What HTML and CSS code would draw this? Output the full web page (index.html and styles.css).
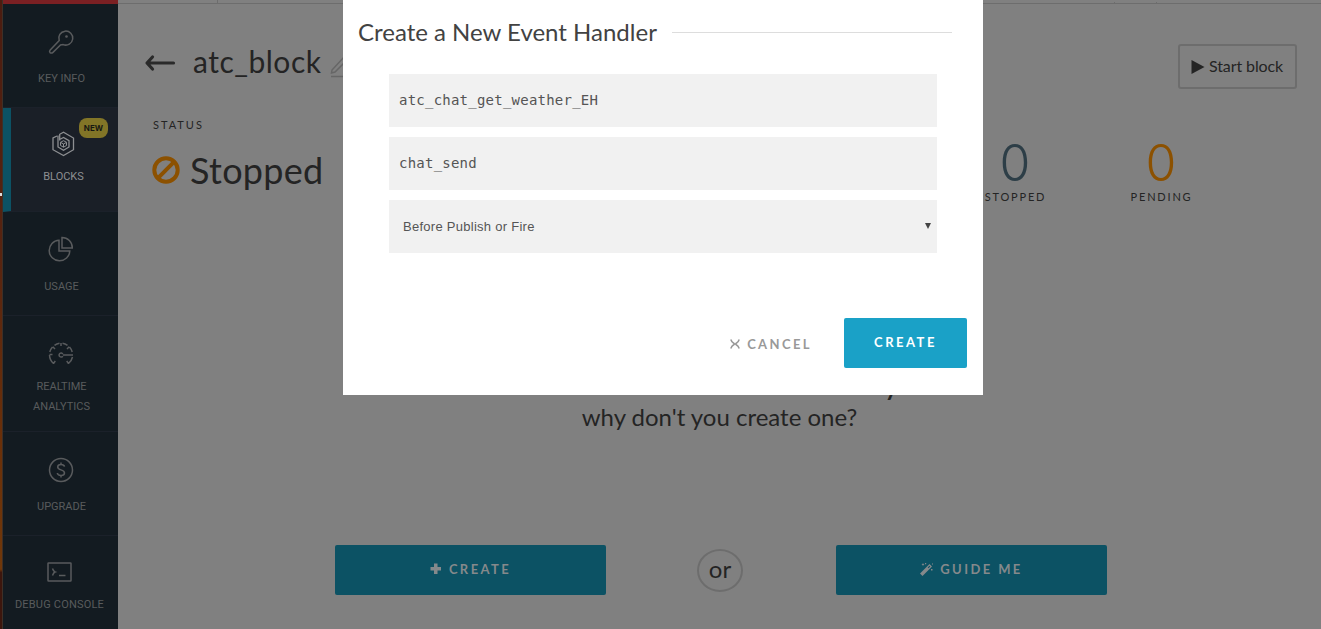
FILE: index.html
```html
<!DOCTYPE html>
<html lang="en">
<head>
<meta charset="utf-8">
<title>Blocks</title>
<link rel="stylesheet" href="styles.css">
</head>
<body>
<div class="app">
  <div class="edge"><i class="glint"></i></div>
  <nav class="sidebar">
    <a class="item key">
      <svg width="26" height="26" viewBox="0 0 26 26"><path d="M11.200 11.500A7 7 0 1 1 15.200 15.600L12.500 16L4.500 23.800Q3.200 24.500 2 23.600Q1 22.300 2.200 21L11.200 11.500Z"/><circle cx="18.500" cy="7.500" r="1.300" class="solid"/></svg>
      <span>KEY INFO</span>
    </a>
    <a class="item blocks">
      <svg width="24" height="26" viewBox="0 0 24 26"><path d="M6 5L2 7V18.700L12.500 24.500L22.500 18.700V7L12.500 1.200L8.700 3.300V9.500M8.700 3.300V8.500L12.500 6.500L18 9.700V16L12.500 19.200L7 16V4.500"/><path d="M9.500 11.300L12.500 9.700L15.500 11.300V14.500L12.500 16.200L9.500 14.500ZM9.500 11.300L12.500 13L15.500 11.300M12.500 13V16.200" stroke-width="1"/></svg>
      <span>BLOCKS</span>
      <b class="badge">NEW</b>
    </a>
    <a class="item usage">
      <svg width="26" height="26" viewBox="0 0 26 26"><path d="M11 4.200A10.300 10.300 0 1 0 21.800 15H11Z"/><path d="M14 1.500V12H24.300A10.300 10.300 0 0 0 14 1.500Z"/></svg>
      <span>USAGE</span>
    </a>
    <a class="item realtime">
      <svg width="26" height="26" viewBox="0 0 26 26"><path d="M5.500 22.500A11.500 11.500 0 0 1 1.500 14M1.800 11A11.500 11.500 0 0 1 4.500 6M6.500 4.300A11.500 11.500 0 0 1 11.500 2.200M14.500 2.200A11.500 11.500 0 0 1 19.500 4.300M21.500 6A11.500 11.500 0 0 1 24.200 11M24.500 16A11.500 11.500 0 0 1 20.500 22.500M13 2V5M4.800 5.800L7 8M21.200 5.800L19 8M1.500 13.500H4.500M5.500 22.500L7.300 20M20.500 22.500L18.700 20M15 14H25M14.800 13A2 2 0 1 0 14.800 15"/></svg>
      <span>REALTIME<br>ANALYTICS</span>
    </a>
    <a class="item upgrade">
      <svg width="26" height="26" viewBox="0 0 26 26"><circle cx="13" cy="13" r="11.500"/><path d="M16.500 9.700C16 6.900 9.800 6.700 9.700 10C9.800 13.800 16.400 12 16.500 16C16.300 19.500 9.700 19.200 9.300 16M13 5.500V7.500M13 18.500V20.500"/></svg>
      <span>UPGRADE</span>
    </a>
    <a class="item debug">
      <svg width="26" height="22" viewBox="0 0 26 22"><rect x="2" y="2" width="23" height="18" rx=".5"/><path d="M6.500 7.500Q7.500 10.500 9 11Q7.500 11.500 6.500 14.500M13 14.500H19.500"/></svg>
      <span>DEBUG CONSOLE</span>
    </a>
  </nav>
  <main class="main">
    <div class="topbar"><i class="tab"></i><i class="tick"></i><i class="tick two"></i></div>
    <header class="header">
      <svg class="back" width="32" height="18" viewBox="0 0 32 18"><path d="M8.500 3L3 9L8.500 15M4 9H29.500"/></svg>
      <h1>atc_block</h1>
      <svg class="pencil" width="24" height="24" viewBox="0 0 24 24"><path d="M2 16L1.500 19L5 18L17 6L14 3Z"/><path d="M1 22.500H22" /></svg>
      <button class="start"><svg width="14" height="14" viewBox="0 0 14 14"><path d="M.5 0L13.500 7L.5 14Z"/></svg><span>Start block</span></button>
    </header>
    <section class="summary">
      <div class="status">
        <h2>STATUS</h2>
        <p><svg width="28" height="28" viewBox="0 0 28 28"><circle cx="14" cy="14" r="11.700"/><path d="M5.700 22.300L22.300 5.700"/></svg><span>Stopped</span></p>
      </div>
      <div class="stat slate"><b>0</b><span>STOPPED</span></div>
      <div class="stat amber"><b>0</b><span>PENDING</span></div>
    </section>
    <section class="empty">
      <strong>y</strong>
      <p>why don't you create one?</p>
    </section>
    <section class="choices">
      <button class="choice"><svg width="12" height="12" viewBox="0 0 12 12"><path d="M4 .5h3.500v3.500H11V7.500H7.500v3.500H4V7.500H.5V4H4z"/></svg><span>CREATE</span></button>
      <div class="or"><span>or</span></div>
      <button class="choice guide"><svg width="13" height="13" viewBox="0 0 13 13"><path d="M0 10.500L9.500 1L12 3.500L2.500 13ZM1.500 1.500L2.500 1L3 0L3.500 1L4.500 1.500L3.500 2L3 3L2.500 2ZM5 0h1.200v1.200H5zM11 6h1.500v1.500H11zM12 .5h1v1h-1z"/><path class="cut" d="M7.800 4.500L9.500 2.800L10.200 3.500L8.500 5.200Z"/></svg><span>GUIDE ME</span></button>
    </section>
  </main>
</div>
<div class="modal">
  <div class="heading"><h2>Create a New Event Handler</h2><hr></div>
  <form class="fields">
    <div class="field"><span>atc_chat_get_weather_EH</span></div>
    <div class="field"><span>chat_send</span></div>
    <div class="field select"><span>Before Publish or Fire</span><svg width="6" height="6" viewBox="0 0 6 6"><path d="M0 0H6L3 6Z"/></svg></div>
  </form>
  <div class="actions">
    <a class="cancel"><svg width="10" height="10" viewBox="0 0 10 10"><path d="M.8 .5Q1.500 3 4 4.500V5.500Q1.500 7 .8 9.500M9.200 .5Q8.500 3 6 4.500V5.500Q8.500 7 9.200 9.500M3.500 5H6.500"/></svg><span>CANCEL</span></a>
    <button class="create"><span>CREATE</span></button>
  </div>
</div>
</body>
</html>
```
FILE: styles.css
```css
* { box-sizing: border-box; }
body { margin: 0; width: 1321px; height: 629px; overflow: hidden; position: relative; background: #808080; color: #242424; font-family: Lato, sans-serif; }
h1, h2, p { margin: 0; font-weight: 400; }
button { border: 0; padding: 0; font: inherit; color: inherit; }
svg { display: block; flex: none; fill: none; }
span { white-space: nowrap; }
.app { display: grid; grid-template-columns: 3px 115px 1203px; height: 629px; }

.edge { background: linear-gradient(#4b1c10 0, #572410 40%, #6a3009 70%, #70380a 90.5%, #3c160d 91%); border-right: 1px solid #3e3027; }
.glint { display: block; width: 2px; height: 3px; margin-top: 193px; background: #ddd; }

.sidebar { display: flex; flex-direction: column; border-top: 4px solid #7b2023; background: #131b21; color: #595b5d; font: 11px/20px Roboto, sans-serif; overflow: hidden; }
.item { display: flex; flex-direction: column; align-items: center; flex: none; height: 104px; border-bottom: 1px solid #1b212a; text-align: center; padding-left: 2px; }
.item svg { stroke: #595b5d; stroke-width: 1.500; margin-right: 1px; }
.item .solid { fill: #595b5d; stroke: none; }
.key { padding-top: 25px; }
.key span { margin-top: 14px; }
.blocks { position: relative; background: #1a1f27; color: #8d8f92; border-left: 8px solid #0c5264; padding: 23px 2px 0 0; }
.blocks svg { stroke: #8d8f92; stroke-width: 1.300; margin-right: 2px; }
.blocks span { margin-top: 10px; }
.badge { position: absolute; right: 10px; top: 10px; width: 29px; height: 20px; border-radius: 8px; background: #827527; color: #171812; font: 700 8px/20px Inter, sans-serif; }
.usage { padding-top: 24px; }
.usage span { margin-top: 15px; }
.realtime { height: 116px; padding-top: 25px; }
.realtime span { margin-top: 10px; }
.upgrade { padding-top: 25px; }
.upgrade span { margin-top: 14px; }
.debug { padding: 25px 2px 0 0; border: 0; }
.debug span { margin-top: 12px; letter-spacing: .2px; }
.debug svg { margin-right: 2px; }

.main { display: flex; flex-direction: column; }
.topbar { display: flex; height: 4px; border-bottom: 1px solid #6d6d6d; }
.tab { width: 100px; border-right: 1px solid #6d6d6d; }
.tick { width: 1px; height: 1px; margin: 2px 0 0 896px; background: #6d6d6d; }
.tick.two { margin-left: 41px; }
.header { display: flex; height: 106px; padding: 40px 24px 0 26px; }
.back { margin-top: 10px; stroke: #2a2a2a; stroke-width: 3.200; stroke-linecap: round; stroke-linejoin: round; }
.header h1 { margin: -2px 0 0 17px; width: 128px; font: 30px/38px Lato, sans-serif; letter-spacing: .5px; white-space: nowrap; }
.pencil { margin: 10px 0 0 9px; stroke: #666; stroke-width: 1.500; }
.start { display: flex; align-items: center; gap: 4px; width: 119px; height: 45px; margin-left: auto; padding-left: 11px; border: 2px solid #6d6d6d; border-radius: 3px; background: transparent; font-size: 16px; letter-spacing: -.1px; }
.start span { padding-bottom: 2px; }
.start svg { fill: #242424; }

.summary { display: flex; height: 124px; padding-right: 87px; }
.status { margin: 5px auto 0 35px; }
.status h2 { font-size: 11px; line-height: 20px; letter-spacing: 2px; }
.status p { display: flex; align-items: center; margin-top: 15px; gap: 10px; font-size: 36px; line-height: 40px; letter-spacing: .3px; margin-left: -1px; }
.status svg { stroke: #8c5100; stroke-width: 4; }
.stat { width: 146px; display: flex; flex-direction: column; align-items: center; padding-top: 26px; }
.stat b { font: 300 50px/54px Inter, sans-serif; }
.stat span { font-size: 11px; line-height: 14px; letter-spacing: 1.800px; margin-right: -1px; }
.slate b { color: #2d3e47; }
.amber b { color: #8c5100; }

.empty { height: 311px; padding-top: 136px; display: flex; flex-direction: column; align-items: center; font-size: 24px; line-height: 34px; }
.empty strong { margin-left: 343px; }
.empty p { margin-top: -4px; white-space: nowrap; }
.choices { display: flex; align-items: center; padding-left: 217px; }
.choice { display: flex; align-items: center; justify-content: center; gap: 7px; width: 271px; height: 50px; padding-bottom: 2px; border-radius: 2px; background: #0c5264; color: #85898b; font-size: 13px; font-weight: 700; letter-spacing: 2.400px; }
.choice svg { fill: #85898b; }
.choice .cut { fill: #0c5264; }
.or { display: flex; align-items: center; justify-content: center; width: 46px; height: 43px; margin: 1px 93px 0 91px; padding-bottom: 5px; border: 2px solid #6d6d6d; border-radius: 50%; font-size: 24px; }

.modal { position: absolute; left: 343px; top: 0; width: 640px; height: 395px; background: #fff; color: #424242; }
.heading { display: flex; align-items: center; height: 64px; padding: 0 31px 0 15px; }
.heading h2 { width: 314px; padding-bottom: 2px; font-size: 24px; white-space: nowrap; }
hr { flex: 1; margin: 0; border: 0; height: 1px; background: #ddd; }
.fields { display: flex; flex-direction: column; gap: 10px; margin: 10px 46px 0; }
.field { display: flex; align-items: center; height: 53px; padding: 0 0 1px 10px; background: #f1f1f1; color: #555; font: 14px "DejaVu Sans Mono", monospace; letter-spacing: .230px; }
.select { font: 13px "Liberation Sans", sans-serif; letter-spacing: .270px; padding: 0 6px 0 14px; justify-content: space-between; }
.select svg { fill: #444; margin-bottom: 1px; }
.actions { display: flex; justify-content: flex-end; align-items: center; padding: 65px 16px 0 0; font-size: 13px; font-weight: 700; letter-spacing: 2.300px; }
.cancel { display: flex; align-items: center; gap: 7px; margin-right: 32px; padding-top: 1px; color: #999; letter-spacing: 2.400px; }
.cancel svg { stroke: #999; stroke-width: 1.500; }
.create { width: 123px; height: 50px; padding: 0 0 2px; border-radius: 2px; background: #1aa1c7; color: #fff; letter-spacing: 2.500px; }
```
